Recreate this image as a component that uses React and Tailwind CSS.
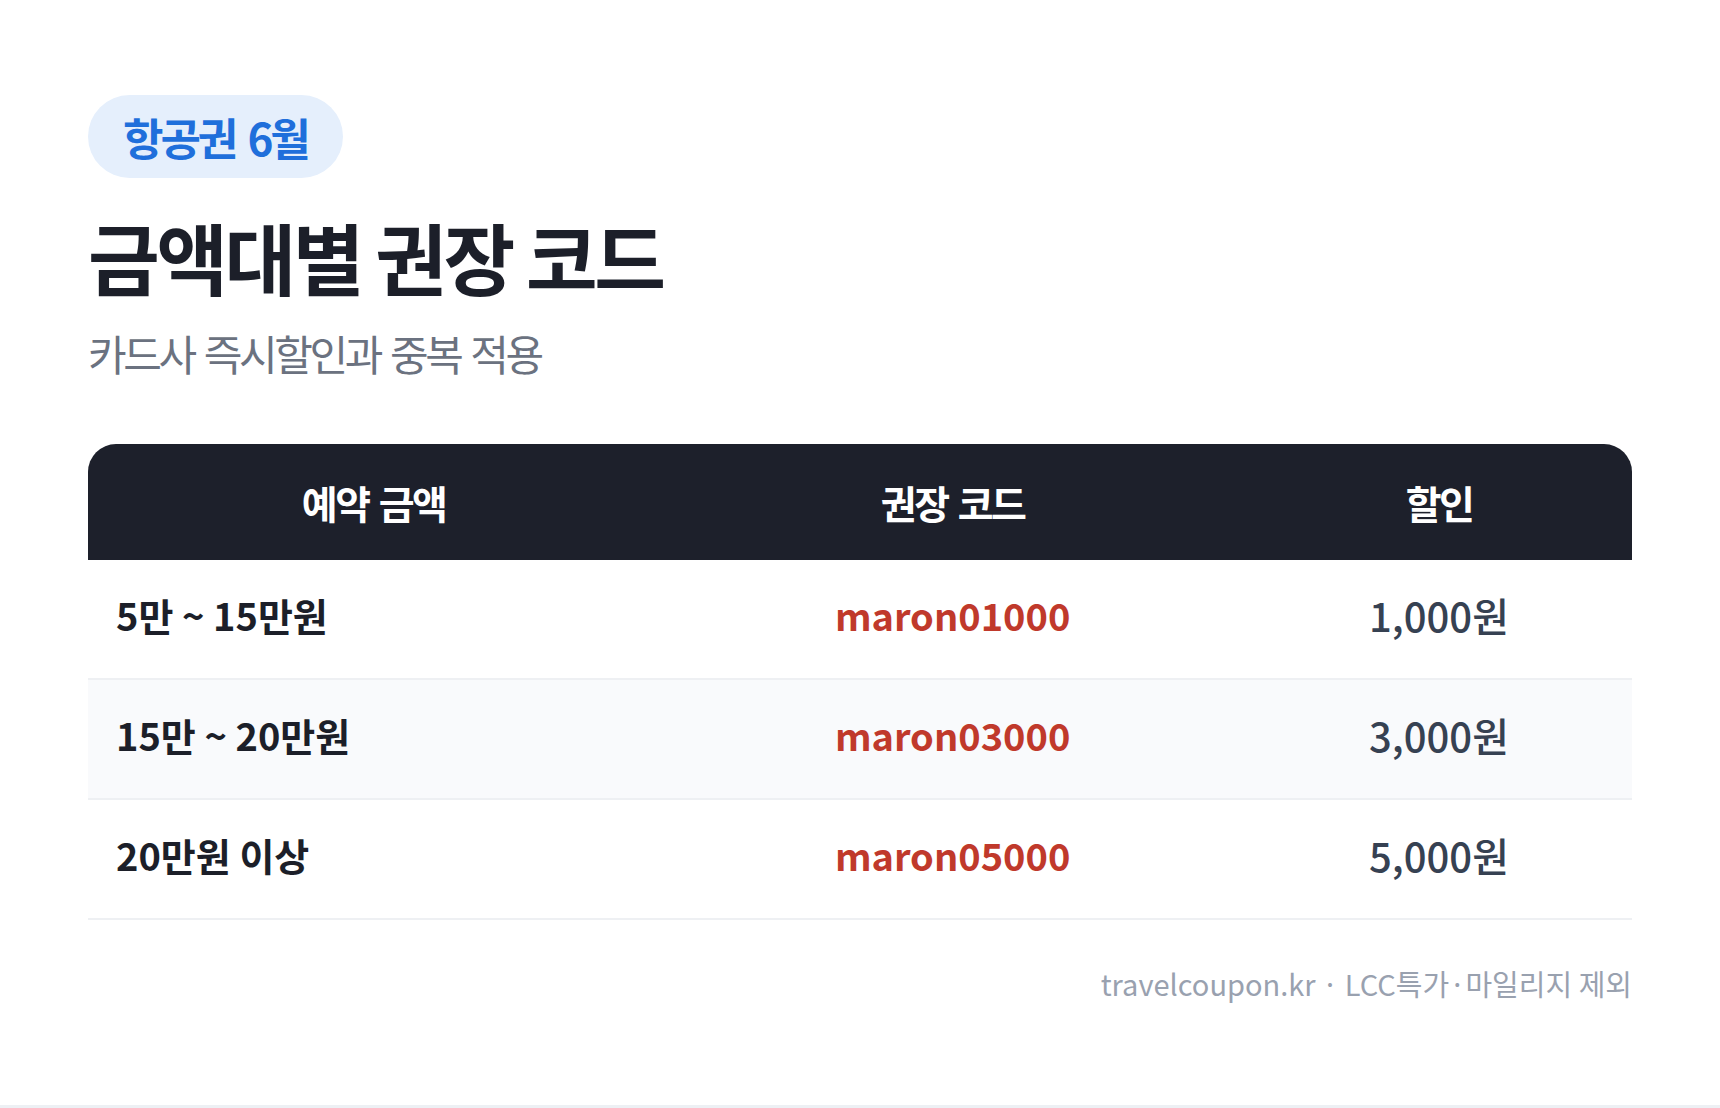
export default function App() {
  const rows = [
    { range: "5만 ~ 15만원", code: "maron01000", off: "1,000원", bg: "bg-white" },
    { range: "15만 ~ 20만원", code: "maron03000", off: "3,000원", bg: "bg-[#f9fafc]" },
    { range: "20만원 이상", code: "maron05000", off: "5,000원", bg: "bg-white" },
  ];
  return (
    <div
      className="w-[1720px] h-[1108px] bg-white border-b-[3px] border-[#edf0f4] box-border overflow-hidden"
      style={{ fontFamily: '"Noto Sans CJK KR", "Noto Sans", sans-serif' }}
    >
      <div className="px-[88px] pt-[95px] flex flex-col">
        <div className="self-start h-[83px] px-[35px] rounded-full bg-[#e5effc] flex items-center">
          <span className="text-[44px] leading-none font-bold tracking-[-0.07em] [word-spacing:0.12em] text-[#1f6fdb]">항공권 6월</span>
        </div>
        <h1 className="mt-[39px] text-[78px] leading-none font-bold tracking-[-0.045em] text-[#1c1f29]">금액대별 권장 코드</h1>
        <p className="mt-[37px] text-[42px] leading-none tracking-[-0.08em] [word-spacing:0.09em] text-[#6b7280]">카드사 즉시할인과 중복 적용</p>

        <div className="mt-[70px]">
          <div className="h-[116px] bg-[#1d202b] rounded-t-[28px] grid grid-cols-[37%_38%_25%] items-center text-white text-[39px] font-bold leading-none tracking-[-0.065em] [word-spacing:0.1em]">
            <div className="text-center">예약 금액</div>
            <div className="text-center">권장 코드</div>
            <div className="text-center">할인</div>
          </div>
          {rows.map((r) => (
            <div
              key={r.code}
              className={`h-[120px] pb-[9px] ${r.bg} border-b-2 border-[#eef0f3] grid grid-cols-[37%_38%_25%] items-center leading-none`}
            >
              <div className="pl-[28px] text-[38px] font-bold text-[#1c1f29]">{r.range}</div>
              <div className="text-center text-[38px] font-bold text-[#c0392b]">{r.code}</div>
              <div className="text-center text-[40px] font-medium text-[#364152]">{r.off}</div>
            </div>
          ))}
        </div>

        <div className="mt-[49px] text-right text-[29px] leading-none text-[#99a1af]">
          travelcoupon.kr · LCC특가·마일리지 제외
        </div>
      </div>
    </div>
  );
}
